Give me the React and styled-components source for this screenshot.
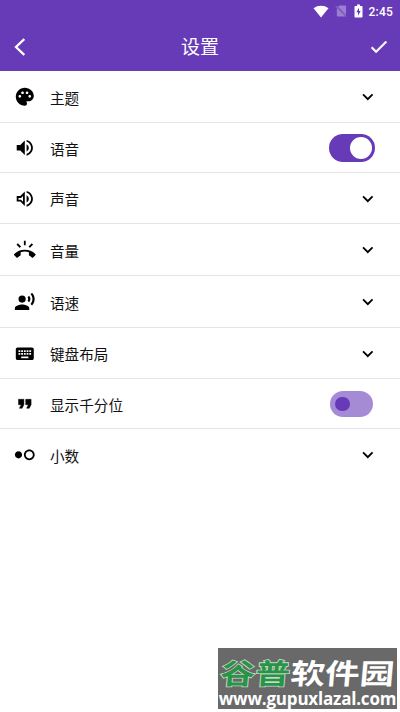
import React from "react";
import styled, { createGlobalStyle } from "styled-components";
import {
  MdPalette,
  MdVolumeUp,
  MdOutlineVolumeUp,
  MdRingVolume,
  MdRecordVoiceOver,
  MdKeyboard,
  MdFormatQuote,
  MdHdrWeak,
  MdCheck,
  MdExpandMore,
} from "react-icons/md";

const Global = createGlobalStyle`
  * { box-sizing: border-box; }
  body {
    margin: 0;
    background: #fff;
    font-family: Roboto, "Noto Sans CJK SC", sans-serif;
  }
`;

const Page = styled.div`
  position: relative;
  width: 400px;
  height: 712px;
  overflow: hidden;
  background: #fff;
`;

const Header = styled.header`
  height: 71px;
  background: #673ab7;
  color: #fff;
`;

const StatusBar = styled.div`
  display: flex;
  align-items: center;
  justify-content: flex-end;
  height: 22px;
  padding-right: 7px;
`;

const StatusIcon = styled.svg`
  display: block;
  flex: none;
  margin-right: ${(p) => p.$gap}px;
`;

const Clock = styled.span`
  font: 500 12px/22px Roboto, sans-serif;
  letter-spacing: 0.2px;
  padding-top: 1px;
`;

const TitleBar = styled.div`
  display: grid;
  grid-template-columns: 40px 1fr 40px;
  align-items: center;
  height: 49px;
`;

const BackIcon = styled.svg`
  display: block;
  margin-left: 13px;
`;

const ConfirmIcon = styled(MdCheck)`
  display: block;
  margin-left: 8px;

  path:last-child {
    stroke: #fff;
    stroke-width: 0.5px;
  }
`;

const Title = styled.h1`
  margin: 0;
  padding-top: 2px;
  text-align: center;
  font-size: 19px;
  line-height: 28px;
  font-weight: 400;
`;

const Row = styled.div`
  display: flex;
  align-items: center;
  height: ${(p) => p.$height}px;
  padding: 1px 27px 0 14px;
  border-bottom: 1px solid ${(p) => (p.$last ? "transparent" : "#e4e4e4")};
  color: #000;
`;

const RowIcon = styled.span`
  display: flex;
  width: 36px;
  font-size: 21.6px;

  path:last-child {
    stroke: #000;
    stroke-width: ${(p) => (p.$bold ? 0.5 : 0)}px;
  }
`;

const Label = styled.span`
  flex: 1;
  padding-top: 3px;
  color: #111;
  font-size: 14.6px;
  line-height: 22px;
`;

const Chevron = styled(MdExpandMore)`
  margin-right: -6px;
`;

const Switch = styled.span`
  display: flex;
  align-items: center;
  justify-content: ${(p) => (p.$on ? "flex-end" : "flex-start")};
  width: ${(p) => (p.$on ? 46 : 43)}px;
  height: ${(p) => (p.$on ? 28.5 : 25.5)}px;
  margin-right: ${(p) => (p.$on ? -2 : 0)}px;
  padding: 0 ${(p) => (p.$on ? 3 : 5)}px;
  border-radius: 15px;
  background: ${(p) => (p.$on ? "#673ab7" : "#a58ad6")};
`;

const Knob = styled.span`
  width: ${(p) => (p.$on ? 22 : 14.5)}px;
  height: ${(p) => (p.$on ? 22 : 14.5)}px;
  border-radius: 50%;
  background: ${(p) => (p.$on ? "#fff" : "#673ab7")};
`;

const Watermark = styled.div`
  position: absolute;
  left: 218px;
  top: 648px;
  width: 179px;
  height: 61px;
  background: #696969;
  color: #fff;
  white-space: nowrap;
`;

const Brand = styled.div`
  display: flex;
  height: 41px;
  padding: 5px 0 0 3px;
  font: 700 34.5px/38px "Noto Sans CJK SC", sans-serif;
  transform: skewX(-5deg) scaleY(0.82);
`;

const BrandGreen = styled.span`
  width: 70px;
  color: #299447;
  letter-spacing: 0.5px;
  -webkit-text-stroke: 2px #c4dcc8;
  paint-order: stroke fill;
`;

const BrandWhite = styled.span`
  letter-spacing: 0.2px;
`;

const Address = styled.div`
  width: 179px;
  text-align: center;
  font: 700 17px/19px "Open Sans", sans-serif;
  letter-spacing: -0.2px;
`;

const rows = [
  { icon: MdPalette, label: "主题", height: 52 },
  { icon: MdVolumeUp, label: "语音", height: 50, toggle: "on" },
  { icon: MdOutlineVolumeUp, label: "声音", height: 51 },
  { icon: MdRingVolume, label: "音量", height: 52 },
  { icon: MdRecordVoiceOver, label: "语速", height: 52 },
  { icon: MdKeyboard, label: "键盘布局", height: 51 },
  { icon: MdFormatQuote, label: "显示千分位", height: 50, toggle: "off", bold: true },
  { icon: MdHdrWeak, label: "小数", height: 52 },
];

function StatusIcons() {
  return (
    <>
      <StatusIcon $gap={6} width="16" height="13" viewBox="0 0 16 13">
        <path d="M.5 3.2C4.8-.1 11.2-.1 15.500 3.200L8 12.500z" fill="#fff" />
      </StatusIcon>
      <StatusIcon $gap={7} width="12" height="14" viewBox="0 0 13 14">
        <path d="M4.500 1H11a1 1 0 0 1 1 1v9.500L3.200 2.300zM2 4l9 9H3a1 1 0 0 1-1-1z" fill="#fff" opacity=".35" />
        <path d="M.8 1.700l11 11.300" stroke="#fff" strokeWidth="1" opacity=".4" />
      </StatusIcon>
      <StatusIcon $gap={6} width="9" height="14" viewBox="0 0 9 14">
        <path
          fillRule="evenodd"
          d="M3 .5h3V2h1.700q.8 0 .8.8v9.900q0 .8-.8.8H1.300q-.8 0-.8-.8V2.800Q.5 2 1.300 2H3zM5 3.800L2.300 8.300H4v3.500l2.700-4.700H5z"
          fill="#fff"
        />
      </StatusIcon>
    </>
  );
}

export default function App() {
  return (
    <Page>
      <Global />
      <Header>
        <StatusBar>
          <StatusIcons />
          <Clock>2:45</Clock>
        </StatusBar>
        <TitleBar>
          <BackIcon width="12" height="20" viewBox="0 0 12 20">
            <path d="M11.300 2L3 10l8.300 8" fill="none" stroke="#fff" strokeWidth="2.300" />
          </BackIcon>
          <Title>设置</Title>
          <ConfirmIcon size={21.6} />
        </TitleBar>
      </Header>
      <main>
        {rows.map(({ icon: Icon, label, height, toggle, bold }, i) => (
          <Row key={label} $height={height} $last={i === rows.length - 1}>
            <RowIcon $bold={bold}>
              <Icon />
            </RowIcon>
            <Label>{label}</Label>
            {toggle ? (
              <Switch $on={toggle === "on"}>
                <Knob $on={toggle === "on"} />
              </Switch>
            ) : (
              <Chevron size={21.6} />
            )}
          </Row>
        ))}
      </main>
      <Watermark>
        <Brand>
          <BrandGreen>谷普</BrandGreen>
          <BrandWhite>软件园</BrandWhite>
        </Brand>
        <Address>www.gupuxlazal.com</Address>
      </Watermark>
    </Page>
  );
}
